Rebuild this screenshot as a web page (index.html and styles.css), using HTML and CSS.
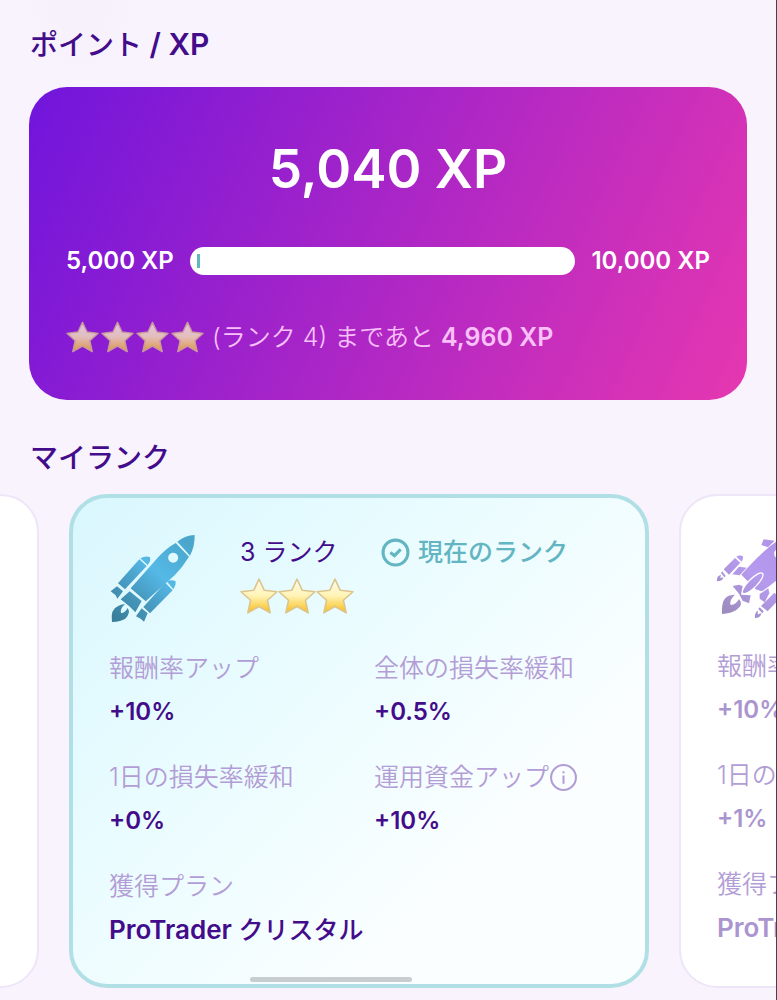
FILE: index.html
```html
<!DOCTYPE html>
<html lang="ja">
<head>
    <meta charset="UTF-8">
    <meta name="viewport" content="width=device-width, initial-scale=1.0">
    <title>ポイント / XP</title>
    <link rel="stylesheet" href="styles.css">
</head>
<body>
    <svg class="defs" aria-hidden="true">
        <defs>
            <linearGradient id="gold" x1="0" y1="0" x2="0" y2="1">
                <stop offset="0" stop-color="#fffdf0"/>
                <stop offset="0.5" stop-color="#fff3b4"/>
                <stop offset="1" stop-color="#f8bd18"/>
            </linearGradient>
            <linearGradient id="blue" gradientUnits="userSpaceOnUse" x1="290" y1="90" x2="80" y2="320">
                <stop offset="0" stop-color="#4aa6cb"/>
                <stop offset="0.4" stop-color="#55b9e6"/>
                <stop offset="0.7" stop-color="#4699bf"/>
                <stop offset="1" stop-color="#397f9b"/>
            </linearGradient>
            <linearGradient id="violet" gradientUnits="userSpaceOnUse" x1="380" y1="180" x2="190" y2="400">
                <stop offset="0" stop-color="#b093ea"/>
                <stop offset="0.5" stop-color="#b59aee"/>
                <stop offset="1" stop-color="#9c8bbc"/>
            </linearGradient>
            <symbol id="star" viewBox="0 0 36 34">
                <path d="M18 1 L23 11.6 L35 13 L26 21 L28.6 33 L18 27 L7.4 33 L10 21 L1 13 L13 11.6 Z" fill="url(#gold)" stroke="#dcc48c" stroke-width="1.5" stroke-linejoin="round"/>
            </symbol>
        </defs>
    </svg>

    <main>
        <h2>ポイント <b>/ XP</b></h2>
        <section class="xp-card">
            <p class="xp-total">5,040 XP</p>
            <div class="xp-bar">
                <span>5,000 XP</span>
                <progress value="40" max="5000" aria-label="XP"></progress>
                <span>10,000 XP</span>
            </div>
            <div class="xp-next">
                <span class="stars">
                    <svg><use href="#star"/></svg>
                    <svg><use href="#star"/></svg>
                    <svg><use href="#star"/></svg>
                    <svg><use href="#star"/></svg>
                </span>
                <p>(ランク 4) まであと <b>4,960 XP</b></p>
            </div>
        </section>

        <h2>マイランク</h2>
        <div class="ranks">
            <article class="rank prev"></article>

            <article class="rank active">
                <div class="rank-head">
                    <svg class="rocket" viewBox="57 66 258 264" fill="url(#blue)">
                        <path d="M262 89 Q286 70 314 69 Q315 102 300 131 Z"/>
                        <path fill-rule="evenodd" d="M257 93 L297 134 Q278 165 254 190 L167 268 L122 229 L205 135 Q230 108 257 93 Z M249 122 a15 15 0 1 0 1 0 Z"/>
                        <path d="M148 142 L170 162 L105 232 L84 214 Z"/>
                        <path d="M151 139 Q168 130 180 136 Q183 148 173 159 Z"/>
                        <path d="M81 223 L99 238 L82 260 L77 250 L62 238 Z"/>
                        <path d="M226 212 L248 235 L180 304 L160 285 Z"/>
                        <path d="M230 208 Q245 202 257 208 Q259 220 250 232 Z"/>
                        <path d="M155 289 L173 304 L162 329 L152 320 L138 313 Z"/>
                        <path d="M119 238 L155 267 L136 301 L118 283 L92 262 Z"/>
                        <path d="M66 330 Q60 291 86 281 Q96 277 105 276 Q89 292 93 303 Q104 304 113 288 Q123 303 106 320 Q92 329 66 330 Z"/>
                    </svg>
                    <div class="rank-name">
                        <h3>3 ランク</h3>
                        <span class="stars">
                            <svg><use href="#star"/></svg>
                            <svg><use href="#star"/></svg>
                            <svg><use href="#star"/></svg>
                        </span>
                    </div>
                    <p class="current">
                        <svg viewBox="0 0 28 28" fill="none" stroke="currentColor" stroke-width="3">
                            <circle cx="14" cy="14" r="12"/>
                            <path d="M9 14 L13 17 L19 11"/>
                        </svg>
                        現在のランク
                    </p>
                </div>
                <dl>
                    <div><dt>報酬率アップ</dt><dd>+10%</dd></div>
                    <div><dt>全体の損失率緩和</dt><dd>+0.5%</dd></div>
                    <div><dt>1日の損失率緩和</dt><dd>+0%</dd></div>
                    <div>
                        <dt>運用資金アップ<button type="button" aria-label="運用資金アップ"><svg viewBox="0 0 28 28" fill="none" stroke="currentColor" stroke-width="2">
                            <circle cx="14" cy="14" r="12"/>
                            <path d="M14 12 V20 M14 8 V10"/>
                        </svg></button></dt>
                        <dd>+10%</dd>
                    </div>
                    <div><dt>獲得プラン</dt><dd class="plan">ProTrader <span>クリスタル</span></dd></div>
                </dl>
            </article>

            <article class="rank next">
                <div class="rank-head">
                    <svg class="rocket" viewBox="168 156 258 264" fill="url(#violet)">
                        <path d="M301 195 L308 178 L341 182 L321 202 Z"/>
                        <path fill-rule="evenodd" d="M241 284 Q300 216 350 182 Q390 160 420 164 Q424 210 395 250 Q350 305 302 334 L284 328 Z M354 206 a15 15 0 1 0 1 0 Z"/>
                        <ellipse cx="275" cy="310" rx="42" ry="13" transform="rotate(-45 275 310)" stroke="#fff" stroke-width="4"/>
                        <path d="M234 260 L257 263 L236 286 L214 283 Z"/>
                        <path d="M222 234 L238 248 L204 284 L188 268 Z"/>
                        <path d="M226 230 Q236 223 246 229 Q247 240 242 245 Z"/>
                        <path d="M184 274 L194 288 L190 292 L180 279 Z"/>
                        <path d="M168 304 Q166 288 180 284 L178 294 L187 292 Q186 304 168 304 Z"/>
                        <path d="M215 318 L234 314 L245 318 L240 344 L269 346 L264 370 L245 362 L234 341 Z"/>
                        <path d="M296 342 L322 325 L325 340 L311 367 L296 356 Z"/>
                        <path d="M340 338 L358 354 L320 394 L300 378 Z"/>
                        <path d="M296 382 L308 394 L304 400 L292 387 Z"/>
                        <path d="M282 414 Q280 397 291 392 L290 403 L301 400 Q300 414 282 414 Z"/>
                        <path d="M183 402 Q180 350 210 346 L222 344 Q204 360 209 375 Q226 374 234 357 Q249 374 226 390 Q210 400 183 402 Z"/>
                    </svg>
                </div>
                <dl>
                    <div><dt>報酬率アップ</dt><dd>+10%</dd></div>
                    <div></div>
                    <div><dt>1日の損失率緩和</dt><dd>+1%</dd></div>
                    <div></div>
                    <div><dt>獲得プラン</dt><dd class="plan">ProTrader</dd></div>
                </dl>
            </article>

            <div class="scroll-thumb"></div>
        </div>
    </main>
</body>
</html>
```

FILE: styles.css
```css
* {
    margin: 0;
    padding: 0;
    box-sizing: border-box;
}

body {
    min-height: 100vh;
    background: radial-gradient(ellipse at 80px 0, #f5f0f9, #f9f3fe 60px);
    border-right: 1px solid #45424f;
    font-family: Inter, "Noto Sans CJK JP", sans-serif;
    font-size: 25px;
    line-height: 36px;
    color: #430c8b;
    overflow-x: hidden;
}

.defs {
    position: absolute;
    width: 0;
    height: 0;
}

main {
    padding: 24px 0 14px;
}

h2 {
    padding: 0 30px;
    font-size: 28px;
    font-weight: 500;
    line-height: 40px;
}

h2 b {
    font-size: 30px;
    font-weight: 600;
}

.stars {
    display: flex;
}

/* points */
.xp-card {
    margin: 22px 29px 38px;
    padding: 40px 37px 45px;
    border-radius: 38px;
    background: linear-gradient(115deg, #7015dc, #e637b0);
    color: #fff;
}

.xp-total {
    font-size: 53px;
    font-weight: 600;
    line-height: 84px;
    text-align: center;
}

.xp-bar {
    display: flex;
    align-items: center;
    gap: 16px;
    margin: 32px 0 40px;
    font-size: 24px;
    font-weight: 600;
    white-space: nowrap;
}

progress {
    appearance: none;
    flex: 1;
    min-width: 0;
    height: 28px;
    padding: 7px;
    border: none;
    border-radius: 14px;
    background: #fff;
}

progress::-webkit-progress-bar {
    background: #fff;
}

progress::-webkit-progress-value {
    background: #62b8bd;
}

.xp-next {
    display: flex;
    align-items: center;
    gap: 8px;
    color: #f9c0f9;
    font-weight: 350;
}

.xp-next b {
    font-weight: 600;
}

.xp-next .stars {
    gap: 2px;
    opacity: 0.75;
}

.xp-next .stars svg {
    width: 33px;
    height: 32px;
}

/* rank carousel */
.ranks {
    position: relative;
    display: flex;
    gap: 30px;
    margin-top: 16px;
    overflow: hidden;
}

.rank {
    flex: 0 0 calc(100% - 196px);
    padding: 36px;
    border: 2px solid #efe5f8;
    border-radius: 38px;
    background: #fff;
}

.prev {
    margin-left: calc(235px - 100%);
}

.active {
    border: 4px solid #b0e0e6;
    background: linear-gradient(135deg, #d9f7fd, #e9fcff 35%, #fbfeff 75%);
}

.next {
    color: #ab95d0;
}

.rank-head {
    display: flex;
    height: 88px;
    margin-bottom: 28px;
}

.rocket {
    width: 86px;
    height: 88px;
}

.rank-name {
    margin-left: 45px;
}

.rank-name h3 {
    font-size: 25px;
    font-weight: 400;
}

.rank-name .stars {
    margin-top: 8px;
}

.rank-name .stars svg {
    width: 38px;
    height: 36px;
}

.current {
    display: flex;
    align-items: center;
    gap: 8px;
    height: 36px;
    margin-left: 27px;
    font-weight: 500;
    color: #62b5c1;
}

.current svg,
dt svg {
    width: 29px;
    height: 29px;
}

dl {
    display: grid;
    grid-template-columns: 265px 1fr;
    row-gap: 29px;
    white-space: nowrap;
}

dt {
    display: flex;
    align-items: center;
    margin-bottom: 8px;
    font-weight: 350;
    color: #b39dd6;
}

dt button {
    display: flex;
    border: none;
    background: none;
    color: inherit;
    cursor: pointer;
}

dd {
    font-size: 24px;
    font-weight: 600;
}

.plan {
    font-size: 26px;
}

.plan span {
    font-size: 25px;
    font-weight: 500;
}

.scroll-thumb {
    position: absolute;
    left: 250px;
    bottom: 6px;
    width: 162px;
    height: 5px;
    border-radius: 3px;
    background: #c8cdd0;
}
```
